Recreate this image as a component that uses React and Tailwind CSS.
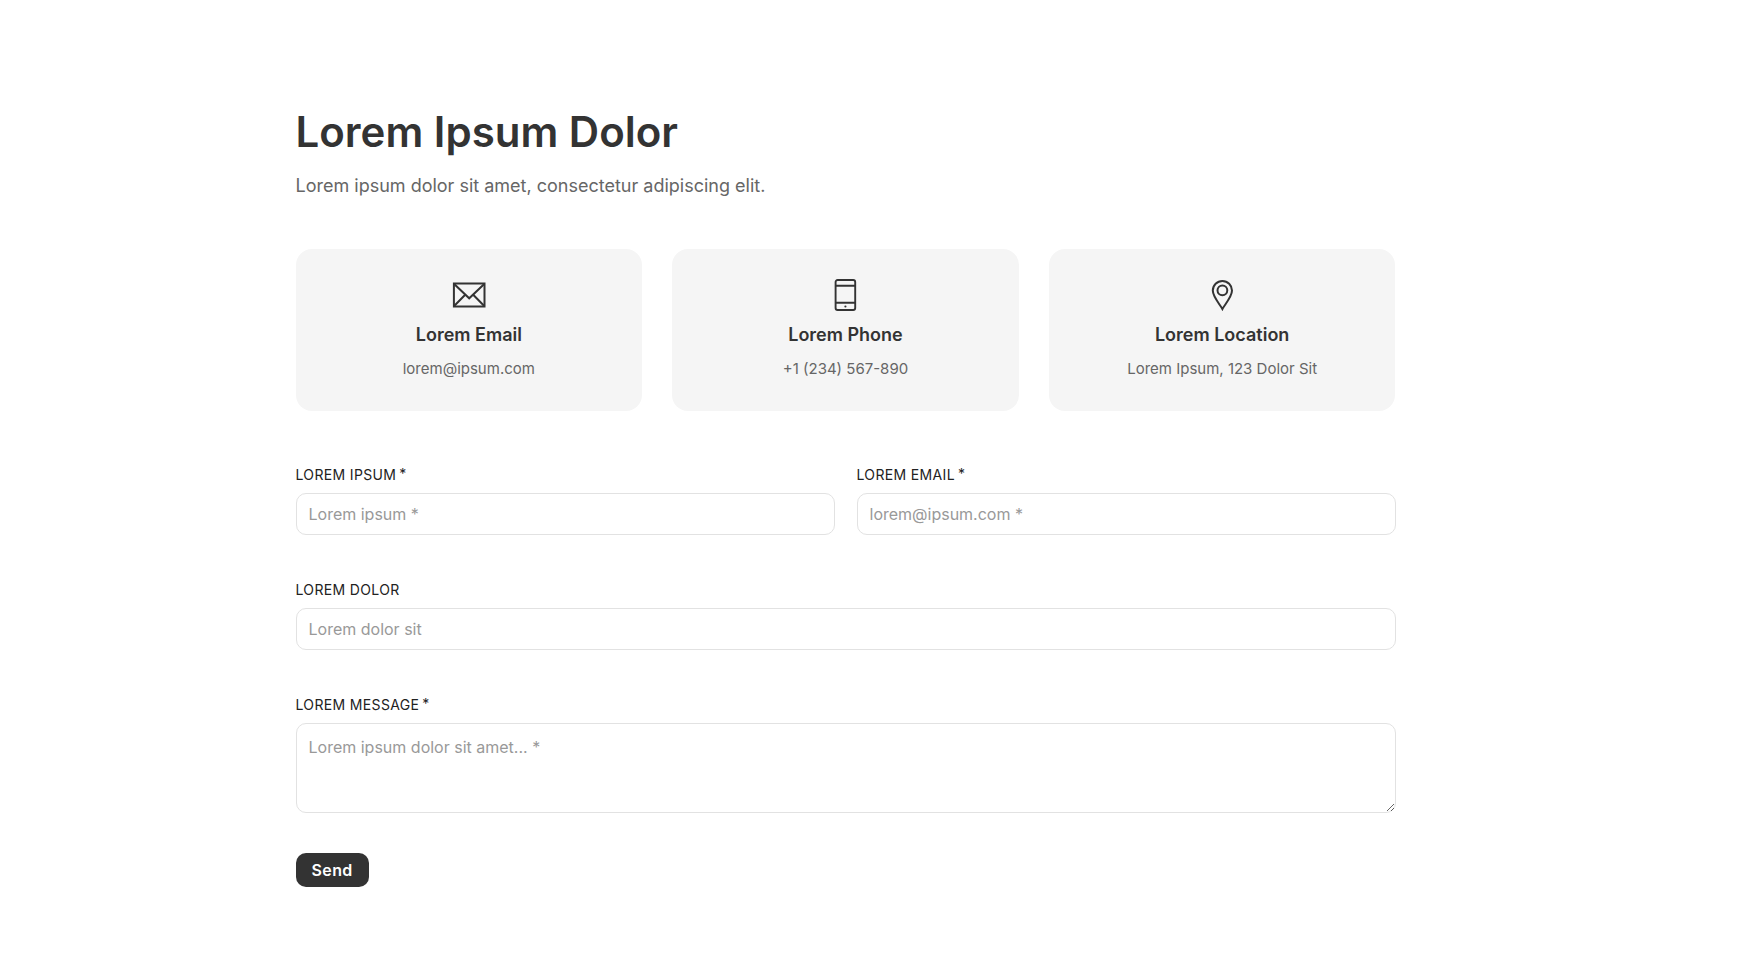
import { useState } from "react";

const EmailIcon = () => (
  <svg className="h-8 w-[34px]" viewBox="0 0 34 32" fill="none" stroke="#333333" strokeWidth="2" aria-hidden="true">
    <path d="M1.9 4.6h30.6v22.8H1.9z" />
    <path d="M1.9 4.8L17.2 19.3 32.5 4.8" />
    <path d="M1.9 27.2L13.2 15.8M32.5 27.2L21.2 15.8" />
  </svg>
);

const PhoneIcon = () => (
  <svg className="h-8 w-[34px]" viewBox="0 0 34 32" fill="none" stroke="#333333" strokeWidth="1.9" aria-hidden="true">
    <rect x="7.6" y="1" width="19.6" height="30" rx="2" />
    <path d="M7.6 6.8h19.6M7.6 23.8h19.6" />
    <circle cx="17.4" cy="27.5" r="1.1" fill="#333333" stroke="none" />
  </svg>
);

const PinIcon = () => (
  <svg className="h-8 w-[34px]" viewBox="0 0 34 32" fill="none" stroke="#333333" strokeWidth="2" aria-hidden="true">
    <path d="M17.4 30C15.4 26 7.8 18 7.8 11.6a9.6 9.6 0 0 1 19.2 0C27 18 19.4 26 17.4 30z" />
    <circle cx="17.4" cy="11.3" r="4.9" />
  </svg>
);

const cards = [
  { title: "Lorem Email", text: "lorem@ipsum.com", Icon: EmailIcon },
  { title: "Lorem Phone", text: "+1 (234) 567-890", Icon: PhoneIcon },
  { title: "Lorem Location", text: "Lorem Ipsum, 123 Dolor Sit", Icon: PinIcon },
];

const fieldClass =
  "block w-full rounded-[10px] border border-[#e2e2e2] bg-white px-3 text-base text-[#333333] placeholder:text-[#999999] outline-none focus:border-[#333333]";

const Label = ({ htmlFor, required, children }) => (
  <label htmlFor={htmlFor} className="mb-2 flex h-5 items-center text-sm text-[#222222] uppercase tracking-wide">
    {children}
    {required && <span className="ml-[3px] pb-[3px]">*</span>}
  </label>
);

const App = () => {
  const [form, setForm] = useState({ name: "", email: "", subject: "", message: "" });

  const handleChange = (e) => {
    setForm({ ...form, [e.target.name]: e.target.value });
  };

  const handleSubmit = (e) => {
    e.preventDefault();
  };

  return (
    <main className="min-h-screen bg-white pt-[104px] pb-16 pr-[55px] font-['Inter',sans-serif] text-[#333333]">
      <div className="mx-auto max-w-[1100px]">

        <h1 className="text-[42px] leading-[56px] font-semibold">Lorem Ipsum Dolor</h1>
        <p className="mt-3 text-lg leading-7 text-[#666666]">
          Lorem ipsum dolor sit amet, consectetur adipiscing elit.
        </p>

        <section className="mt-[49px] grid grid-cols-3 gap-[30px]">
          {cards.map(({ title, text, Icon }) => (
            <div key={title} className="flex flex-col items-center rounded-2xl bg-[#f5f5f5] py-[30px]">
              <Icon />
              <h2 className="mt-2.5 text-lg leading-7 font-semibold">{title}</h2>
              <p className="mt-2 text-[15px] leading-6 text-[#666666]">{text}</p>
            </div>
          ))}
        </section>

        <form onSubmit={handleSubmit} className="mt-[54px]">
          <div className="grid grid-cols-2 gap-[22px]">
            <div>
              <Label htmlFor="name" required>Lorem Ipsum</Label>
              <input id="name" name="name" type="text" placeholder="Lorem ipsum *" value={form.name} onChange={handleChange} className={`${fieldClass} h-[42px]`} />
            </div>
            <div>
              <Label htmlFor="email" required>Lorem Email</Label>
              <input id="email" name="email" type="email" placeholder="lorem@ipsum.com *" value={form.email} onChange={handleChange} className={`${fieldClass} h-[42px]`} />
            </div>
          </div>

          <div className="mt-[45px]">
            <Label htmlFor="subject">Lorem Dolor</Label>
            <input id="subject" name="subject" type="text" placeholder="Lorem dolor sit" value={form.subject} onChange={handleChange} className={`${fieldClass} h-[42px]`} />
          </div>

          <div className="mt-[45px]">
            <Label htmlFor="message" required>Lorem Message</Label>
            <textarea id="message" name="message" placeholder="Lorem ipsum dolor sit amet... *" value={form.message} onChange={handleChange} className={`${fieldClass} h-[90px] resize-y py-[11px]`} />
          </div>

          <button type="submit" className="mt-10 h-[34px] cursor-pointer rounded-[10px] bg-[#333333] px-4 text-base font-semibold tracking-wide text-white">
            Send
          </button>
        </form>

      </div>
    </main>
  );
};

export default App;
